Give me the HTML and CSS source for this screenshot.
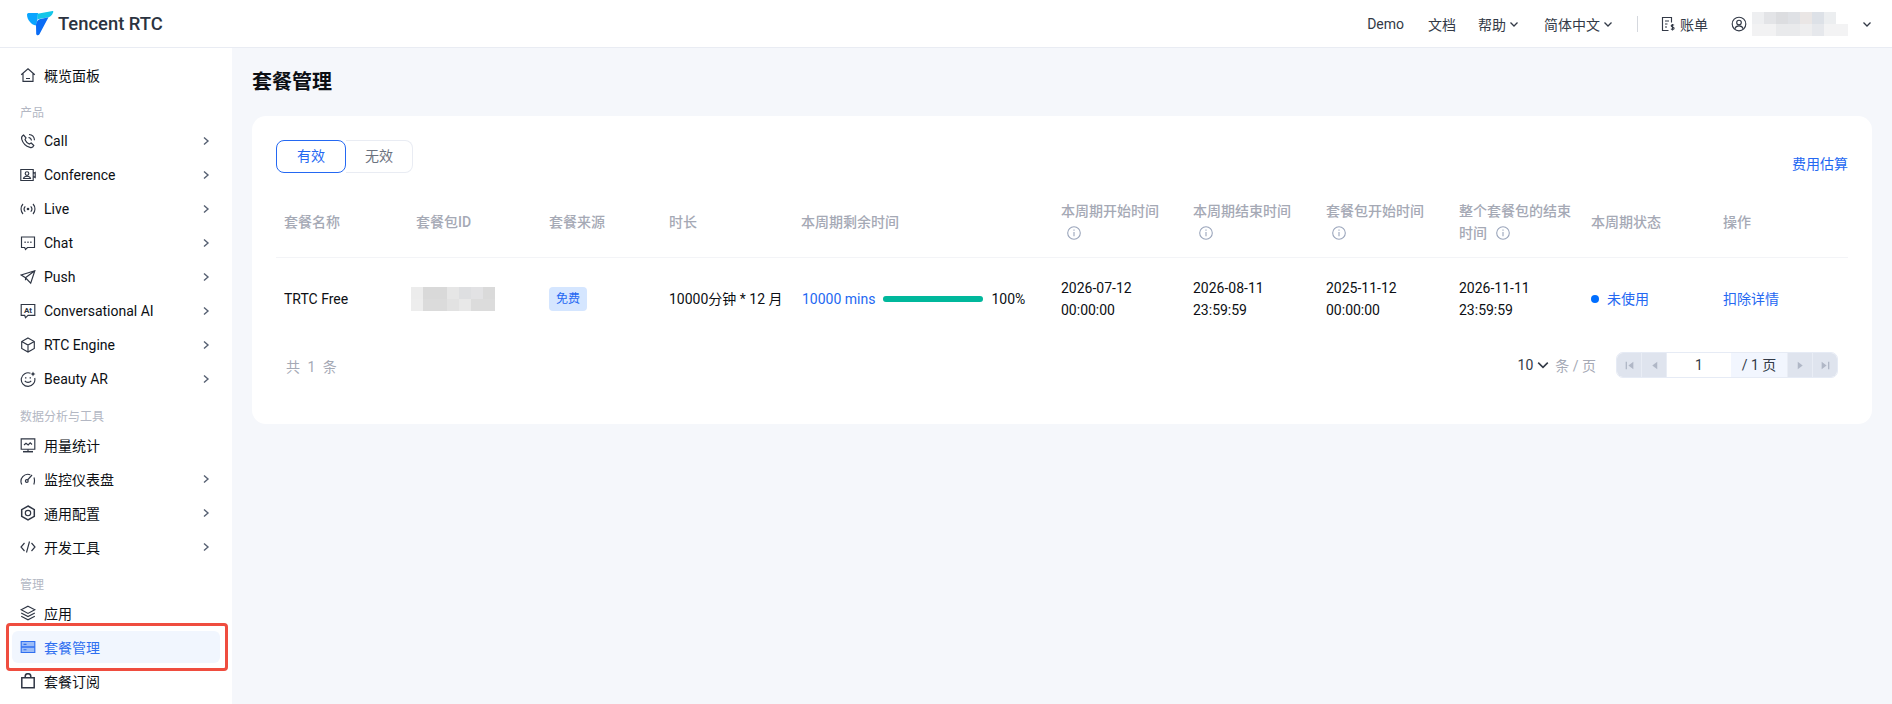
FILE: index.html
```html
<!DOCTYPE html>
<html lang="en">
<head>
    <meta charset="UTF-8">
    <meta name="viewport" content="width=device-width, initial-scale=1.0">
    <title>Tencent RTC</title>
    <link rel="stylesheet" href="styles.css">
</head>
<body>
    <div class="topbar">
        <div class="brand">
            <svg class="logo" viewBox="0 0 27 25" width="27" height="25">
                <path d="M0 3.500C0 2.500 1 2 2.200 2H11L10.500 8.500 8.800 14.500C4 13.800 0 8.500 0 3.500Z" fill="#0aa5ff"/>
                <path d="M10.500 2.800 25.500 0C26.300 0 26.400.5 26.200 1.200 25 4.500 23 6.200 20.500 6.500L10.500 8.200Z" fill="#14c6e8"/>
                <path d="M21.500 6.300 12.300 23.500C11.500 24.800 9.500 24.500 9.200 23L9 13.500C9.500 10 11 8.500 13.500 8Z" fill="#0a6cf5"/>
            </svg>
            <span class="brand-name">Tencent RTC</span>
        </div>
        <div class="topnav">
            <a class="topnav-link">Demo</a>
            <a class="topnav-link">文档</a>
            <a class="topnav-link">帮助<svg class="caret" viewBox="0 0 10 10"><path d="M1.500 3.500 5 7l3.500-3.500"/></svg></a>
            <a class="topnav-link">简体中文<svg class="caret" viewBox="0 0 10 10"><path d="M1.500 3.500 5 7l3.500-3.500"/></svg></a>
            <span class="topnav-sep"></span>
            <a class="topnav-link bill">
                <svg class="icon" viewBox="0 0 16 16"><path d="M8.500 14.500H2.500v-13h9v5M5 5h4M5 8h2.500M5 11h2"/><path d="M14 9.200c-.4-.6-2.800-.9-2.800.6 0 1.500 2.900.9 2.900 2.500 0 1.500-2.600 1.300-3.100.5M12.500 7.900v6.600"/></svg>
                账单
            </a>
            <svg class="icon user-icon" viewBox="0 0 16 16"><circle cx="8" cy="8" r="6.800"/><circle cx="8" cy="6.500" r="2.300"/><path d="M3.800 12.800c.6-2 2.200-3 4.200-3s3.600 1 4.200 3"/></svg>
            <span class="user-blur"></span>
            <svg class="caret" viewBox="0 0 10 10"><path d="M1.500 3.500 5 7l3.500-3.500"/></svg>
        </div>
    </div>

    <div class="layout">
        <div class="sidebar">
            <a class="nav-item">
                <svg class="icon" viewBox="0 0 16 16"><path d="M1.200 7.800 8 1.800l6.800 6M3 6.500v7.800h10V6.500M6 11.500h4"/></svg>
                <span class="nav-text">概览面板</span>
            </a>

            <div class="nav-group">产品</div>
            <a class="nav-item">
                <svg class="icon" viewBox="0 0 16 16"><path d="M3.500 2 6 4.800 5 6.800c.8 1.800 2.200 3.300 4.200 4.200l2-1 2.600 2.500c-.6 1.600-2.200 2.400-3.800 1.900C5.800 13.300 2.800 10.300 1.700 6.200 1.300 4.500 2 2.800 3.500 2Z"/><path d="M8.500 4.500c1.600.2 2.700 1.300 3 3M9 1.500c3 .3 5.300 2.500 5.500 5.700"/></svg>
                <span class="nav-text">Call</span>
                <svg class="chev" viewBox="0 0 10 10"><path d="M3 1.500 7 5 3 8.500"/></svg>
            </a>
            <a class="nav-item">
                <svg class="icon" viewBox="0 0 16 16"><path d="M.8 2.500h12.400v11H.8zM13.200 6.500l2-1v5l-2-1"/><circle cx="7" cy="6.500" r="1.800"/><path d="M3.500 11.500c.3-1.500 1.800-2.300 3.500-2.300s3.200.8 3.500 2.300z"/></svg>
                <span class="nav-text">Conference</span>
                <svg class="chev" viewBox="0 0 10 10"><path d="M3 1.500 7 5 3 8.500"/></svg>
            </a>
            <a class="nav-item">
                <svg class="icon" viewBox="0 0 16 16"><circle class="dot" cx="8" cy="8" r="1.300"/><path d="M5.300 5.300c-1.400 1.500-1.400 3.900 0 5.400M10.700 5.300c1.400 1.500 1.400 3.900 0 5.400M3 3c-2.600 2.800-2.600 7.200 0 10M13 3c2.600 2.800 2.600 7.200 0 10"/></svg>
                <span class="nav-text">Live</span>
                <svg class="chev" viewBox="0 0 10 10"><path d="M3 1.500 7 5 3 8.500"/></svg>
            </a>
            <a class="nav-item">
                <svg class="icon" viewBox="0 0 16 16"><path d="M1.500 2h13v10.500H7.500l-2 2-.8-2H1.500z"/><path class="bold" d="M4.500 7.300h1.200M7.400 7.300h1.200M10.300 7.300h1.200"/></svg>
                <span class="nav-text">Chat</span>
                <svg class="chev" viewBox="0 0 10 10"><path d="M3 1.500 7 5 3 8.500"/></svg>
            </a>
            <a class="nav-item">
                <svg class="icon" viewBox="0 0 16 16"><path d="M14.800 1.800 1.200 6l4.300 2.800 5.200 5.400zM14.800 1.800 5.500 8.800M5.500 8.800v2.500"/></svg>
                <span class="nav-text">Push</span>
                <svg class="chev" viewBox="0 0 10 10"><path d="M3 1.500 7 5 3 8.500"/></svg>
            </a>
            <a class="nav-item">
                <svg class="icon" viewBox="0 0 16 16"><path d="M1.200 1.500h13.600v10.800H8l-2.500 2.500-.8-2.500H1.200z"/><text class="icon-text" x="8" y="9.800">At</text></svg>
                <span class="nav-text">Conversational AI</span>
                <svg class="chev" viewBox="0 0 10 10"><path d="M3 1.500 7 5 3 8.500"/></svg>
            </a>
            <a class="nav-item">
                <svg class="icon" viewBox="0 0 16 16"><path d="M8 1 14.300 4.500v7L8 15l-6.300-3.500v-7zM1.700 4.500 8 8l6.300-3.500M8 8v7"/></svg>
                <span class="nav-text">RTC Engine</span>
                <svg class="chev" viewBox="0 0 10 10"><path d="M3 1.500 7 5 3 8.500"/></svg>
            </a>
            <a class="nav-item">
                <svg class="icon" viewBox="0 0 16 16"><path d="M10.500 2.200A6.800 6.800 0 1 0 14.700 7"/><path d="M4.800 9.800c1.500 2 4.900 2 6.400 0M5 6.800h1.400M9.600 6.800H11"/><path class="dot" d="M13 .5l.8 1.700 1.700.8-1.700.8-.8 1.700-.8-1.700-1.700-.8 1.700-.8z"/></svg>
                <span class="nav-text">Beauty AR</span>
                <svg class="chev" viewBox="0 0 10 10"><path d="M3 1.500 7 5 3 8.500"/></svg>
            </a>

            <div class="nav-group">数据分析与工具</div>
            <a class="nav-item">
                <svg class="icon" viewBox="0 0 16 16"><path d="M1.200 1.800h13.600v10.400H1.200z"/><path class="bold" d="M3 14.700h10"/><path d="M8 12.200v2.500M4 8l2-1.800 2.200 1.800L10.200 5.800 12 7.500"/></svg>
                <span class="nav-text">用量统计</span>
            </a>
            <a class="nav-item">
                <svg class="icon" viewBox="0 0 16 16"><path d="M1.800 13.500a7 7 0 0 1 8.500-9.800M14 6.500c.7 2.300.6 4.800-.2 7"/><path d="M7.500 9 12 4"/><circle cx="6.800" cy="10" r="1.400"/></svg>
                <span class="nav-text">监控仪表盘</span>
                <svg class="chev" viewBox="0 0 10 10"><path d="M3 1.500 7 5 3 8.500"/></svg>
            </a>
            <a class="nav-item">
                <svg class="icon" viewBox="0 0 16 16"><path class="bold" d="M8 1 14.300 4.600v6.800L8 15l-6.300-3.600V4.600z"/><circle cx="8" cy="8" r="2.700"/></svg>
                <span class="nav-text">通用配置</span>
                <svg class="chev" viewBox="0 0 10 10"><path d="M3 1.500 7 5 3 8.500"/></svg>
            </a>
            <a class="nav-item">
                <svg class="icon" viewBox="0 0 16 16"><path d="M4.500 4 1 8l3.500 4M11.500 4 15 8l-3.500 4M9.500 2.500 6.500 13.500"/></svg>
                <span class="nav-text">开发工具</span>
                <svg class="chev" viewBox="0 0 10 10"><path d="M3 1.500 7 5 3 8.500"/></svg>
            </a>

            <div class="nav-group">管理</div>
            <a class="nav-item">
                <svg class="icon" viewBox="0 0 16 16"><path d="M8 1.200 14.800 4.800 8 8.400 1.200 4.800zM1.200 8 8 11.600 14.800 8M1.200 11.200 8 14.800l6.800-3.600"/></svg>
                <span class="nav-text">应用</span>
            </a>
            <a class="nav-item active">
                <svg class="icon" viewBox="0 0 16 16"><path class="solid" d="M1.200 2.500h13.600v11H1.200z"/><path class="bold" d="M1.200 8h13.600"/><path class="notch" d="M3.500 5.300h3M3.500 10.700h3"/></svg>
                <span class="nav-text">套餐管理</span>
            </a>
            <a class="nav-item">
                <svg class="icon" viewBox="0 0 16 16"><path class="bold" d="M1.800 4.800h12.400v10H1.800zM5.200 4.800V3.500a2.800 2.800 0 0 1 5.600 0v1.300"/></svg>
                <span class="nav-text">套餐订阅</span>
            </a>
        </div>

        <div class="main">
            <h2 class="page-title">套餐管理</h2>
            <div class="card">
                <div class="toolbar">
                    <div class="tabs">
                        <span class="tab on">有效</span>
                        <span class="tab">无效</span>
                    </div>
                    <a class="link">费用估算</a>
                </div>

                <table class="plans">
                    <colgroup>
                        <col class="c132"><col class="c133"><col class="c120"><col class="c132"><col class="c260"><col class="c132"><col class="c133"><col class="c133"><col class="c132"><col class="c132"><col class="c133">
                    </colgroup>
                    <thead>
                        <tr>
                            <th>套餐名称</th>
                            <th>套餐包ID</th>
                            <th>套餐来源</th>
                            <th>时长</th>
                            <th>本周期剩余时间</th>
                            <th>本周期开始时间 <svg class="info" viewBox="0 0 14 14"><circle cx="7" cy="7" r="6.300"/><path d="M7 6v4.300M7 3.500v1.200"/></svg></th>
                            <th>本周期结束时间 <svg class="info" viewBox="0 0 14 14"><circle cx="7" cy="7" r="6.300"/><path d="M7 6v4.300M7 3.500v1.200"/></svg></th>
                            <th>套餐包开始时间 <svg class="info" viewBox="0 0 14 14"><circle cx="7" cy="7" r="6.300"/><path d="M7 6v4.300M7 3.500v1.200"/></svg></th>
                            <th>整个套餐包的结束时间 <svg class="info" viewBox="0 0 14 14"><circle cx="7" cy="7" r="6.300"/><path d="M7 6v4.300M7 3.500v1.200"/></svg></th>
                            <th>本周期状态</th>
                            <th>操作</th>
                        </tr>
                    </thead>
                    <tbody>
                        <tr>
                            <td>TRTC Free</td>
                            <td><span class="id-blur"></span></td>
                            <td><span class="tag">免费</span></td>
                            <td>10000分钟 * 12 月</td>
                            <td>
                                <div class="usage">
                                    <span class="link">10000 mins</span>
                                    <span class="bar"><span class="bar-fill"></span></span>
                                    <span>100%</span>
                                </div>
                            </td>
                            <td>2026-07-12<br>00:00:00</td>
                            <td>2026-08-11<br>23:59:59</td>
                            <td>2025-11-12<br>00:00:00</td>
                            <td>2026-11-11<br>23:59:59</td>
                            <td><span class="status"><i class="status-dot"></i>未使用</span></td>
                            <td><a class="link">扣除详情</a></td>
                        </tr>
                    </tbody>
                </table>

                <div class="pager-row">
                    <span class="total">共 1 条</span>
                    <div class="pager-right">
                        <span class="page-size">10<svg class="caret" viewBox="0 0 10 10"><path d="M1 3 5 7l4-4"/></svg></span>
                        <span class="per-page">条 / 页</span>
                        <div class="pager">
                            <span class="pg-btn"><svg viewBox="0 0 10 10"><path d="M1.500 1.500h1.200v7H1.500zM8.500 1.500v7L4 5z"/></svg></span>
                            <span class="pg-btn"><svg viewBox="0 0 10 10"><path d="M7.500 1.500v7L3 5z"/></svg></span>
                            <span class="pg-input">1</span>
                            <span class="pg-count">/ 1 页</span>
                            <span class="pg-btn"><svg viewBox="0 0 10 10"><path d="M2.500 1.500v7L7 5z"/></svg></span>
                            <span class="pg-btn"><svg viewBox="0 0 10 10"><path d="M1.500 1.500v7L6 5zM7.300 1.500h1.200v7H7.300z"/></svg></span>
                        </div>
                    </div>
                </div>
            </div>
        </div>
    </div>
</body>
</html>
```

FILE: styles.css
```css
*{
    margin: 0;
    padding: 0;
    box-sizing: border-box;
}
body{
    height: 100vh;
    overflow: hidden;
    background-color: #f5f7fb;
    font-family: Roboto, "Noto Sans CJK SC", sans-serif;
    font-size: 14px;
    color: #111;
}
a{
    color: inherit;
    text-decoration: none;
}

/* top bar */
.topbar{
    height: 48px;
    background-color: #fff;
    border-bottom: 1px solid #e9ecf3;
    display: flex;
    align-items: center;
    justify-content: space-between;
}
.brand{
    display: flex;
    align-items: center;
    margin-left: 27px;
    gap: 4px;
}
.logo{
    display: block;
}
.brand-name{
    font-size: 18.4px;
    font-weight: 500;
    color: #2b3340;
}
.topnav{
    display: flex;
    align-items: center;
    padding-right: 20px;
    color: #333a47;
}
.topnav-link{
    display: flex;
    align-items: center;
    margin-right: 24px;
}
.topnav-link .caret{
    margin-left: 3px;
}
.topnav-link:nth-child(2){
    margin-right: 22px;
}
.topnav-link:nth-child(3){
    margin-right: 25px;
}
.topnav-sep{
    width: 1px;
    height: 16px;
    background-color: #d5d8de;
    margin-right: 22px;
}
.bill{
    gap: 4px;
    margin-right: 23px;
}
.user-blur{
    width: 107px;
    height: 24px;
    margin: 0 3px 0 5px;
    background:
        linear-gradient(90deg, #eeeff1 0 12px, #e3e4e7 12px 24px, #dcdde0 24px 36px, #dfe1e5 36px 48px, #eae6e5 48px 60px, #dde1e7 60px 72px, #eceef0 72px 84px, #fff 84px) top / 100% 50% no-repeat,
        linear-gradient(90deg, #f2f2f3 0 24px, #e9eaec 24px 48px, #eeeeef 48px 60px, #e6e8ec 60px 72px, #f3f3f4 72px 96px, #fff 96px) bottom / 100% 50% no-repeat;
}
.icon{
    width: 16px;
    height: 16px;
    flex-shrink: 0;
    fill: none;
    stroke: currentColor;
    stroke-width: 1.15;
}
.icon .dot{
    fill: currentColor;
    stroke: none;
}
.icon .bold{
    stroke-width: 1.5;
}
.icon-text{
    font-size: 8px;
    font-weight: 700;
    fill: currentColor;
    stroke: none;
    text-anchor: middle;
}
.caret{
    width: 10px;
    height: 10px;
    fill: none;
    stroke: #333a47;
    stroke-width: 1.3;
}

/* side menu */
.layout{
    display: flex;
    height: calc(100vh - 48px);
}
.sidebar{
    width: 232px;
    flex-shrink: 0;
    background-color: #fff;
    padding: 11px 12px 0;
    overflow: hidden;
}
.nav-item{
    position: relative;
    display: flex;
    align-items: center;
    gap: 8px;
    height: 32px;
    padding: 0 8px;
    margin-bottom: 2px;
    border-radius: 6px;
    color: #2f3644;
}
.nav-text{
    flex: 1;
    color: #0c0f14;
}
.chev{
    width: 10px;
    height: 10px;
    margin-right: 1px;
    fill: none;
    stroke: #566072;
    stroke-width: 1.4;
}
.nav-group{
    height: 24px;
    line-height: 24px;
    margin-top: 10px;
    padding-left: 8px;
    font-size: 12px;
    color: #b3b7c3;
}
.nav-item.active{
    background-color: #f1f6fe;
    color: #2f6ff0;
}
.nav-item.active .nav-text{
    color: #2f6ff0;
}
.nav-item.active .solid{
    fill: #9dbdf7;
}
.nav-item.active .notch{
    stroke: #2f6ff0;
}
/* red marker drawn over the screenshot */
.nav-item.active::after{
    content: "";
    position: absolute;
    top: -8px;
    bottom: -8px;
    left: -6px;
    right: -8px;
    border: 3px solid #ef4d3f;
    border-radius: 4px;
}

/* main */
.main{
    flex: 1;
    padding: 20px 20px 0;
}
.page-title{
    font-size: 20px;
    font-weight: 600;
    line-height: 28px;
    margin-bottom: 20px;
    color: #0c0f14;
}
.card{
    height: 308px;
    padding: 24px;
    background-color: #fff;
    border-radius: 14px;
}
.toolbar{
    display: flex;
    justify-content: space-between;
    align-items: flex-end;
    height: 35px;
}
.tabs{
    display: flex;
    align-self: flex-start;
    height: 33px;
}
.tab{
    width: 67px;
    line-height: 31px;
    text-align: center;
    color: #6b7280;
    border: 1px solid #e9ecf3;
    border-left: none;
    border-radius: 0 8px 8px 0;
}
.tab.on{
    width: 70px;
    color: #2468f2;
    border: 1px solid #2468f2;
    border-radius: 8px;
}
.link{
    color: #2468f2;
    line-height: 22px;
}

/* table */
.plans{
    width: 1572px;
    margin-top: 12px;
    table-layout: fixed;
    border-collapse: separate;
    border-spacing: 0;
}
.c120{ width: 120px; }
.c132{ width: 132px; }
.c133{ width: 133px; }
.c260{ width: 260px; }
.plans th{
    padding: 13px 8px;
    text-align: left;
    font-weight: 500;
    line-height: 22px;
    color: #a5a9b5;
    border-bottom: 1px solid #f3f4f7;
}
.plans td{
    padding: 19px 8px;
    line-height: 22px;
    color: #0c0f14;
}
.info{
    width: 14px;
    height: 14px;
    margin-left: 6px;
    vertical-align: -2px;
    fill: none;
    stroke: #9aa5bb;
    stroke-width: 1.1;
}
.id-blur{
    display: block;
    width: 84px;
    height: 24px;
    margin-left: -5px;
    background:
        linear-gradient(90deg, #ececec 0 12px, #d9d9d9 12px 36px, #e6e6e6 36px 48px, #dedfe1 48px 60px, #e2e2e4 60px 72px, #dadada 72px) top / 100% 50% no-repeat,
        linear-gradient(90deg, #ededed 0 12px, #dbdbdb 12px 36px, #e2e2e2 36px 48px, #e8e8e8 48px 60px, #dcdcdc 60px);
}
.tag{
    display: block;
    width: 38px;
    height: 24px;
    line-height: 24px;
    text-align: center;
    font-size: 12px;
    color: #2468f2;
    background-color: #d5e6ff;
    border-radius: 4px;
}
.usage{
    display: flex;
    align-items: center;
    white-space: nowrap;
    gap: 8px;
    padding-left: 1px;
}
.bar{
    width: 100px;
    height: 6px;
    border-radius: 3px;
    background-color: #e6e9ef;
}
.bar-fill{
    display: block;
    width: 100%;
    height: 100%;
    border-radius: 3px;
    background-color: #00b89c;
}
.status{
    display: flex;
    align-items: center;
    color: #2468f2;
}
.status-dot{
    width: 8px;
    height: 8px;
    margin-right: 8px;
    border-radius: 50%;
    background-color: #006eff;
}

/* pagination */
.pager-row{
    display: flex;
    justify-content: space-between;
    align-items: center;
    margin: 12px 10px 0 0;
    height: 26px;
}
.total{
    padding: 2px 0 0 10px;
    color: #a5a9b5;
    word-spacing: 4px;
}
.pager-right{
    display: flex;
    align-items: center;
}
.page-size{
    display: flex;
    align-items: center;
    gap: 4px;
    padding-left: 1px;
    color: #333a47;
}
.page-size .caret{
    width: 12px;
    height: 12px;
}
.per-page{
    margin: 0 20px 0 6px;
    color: #a5a9b5;
}
.pager{
    display: flex;
    height: 26px;
    border: 1px solid #e6ebf5;
    border-radius: 7px;
    overflow: hidden;
}
.pg-btn{
    width: 25px;
    display: flex;
    align-items: center;
    justify-content: center;
    background-color: #dfe4ee;
    border-right: 1px solid #e9edf5;
}
.pg-btn:nth-last-child(-n+2){
    border-right: none;
    border-left: 1px solid #e9edf5;
}
.pg-btn svg{
    width: 11px;
    height: 11px;
    fill: #b0b7c6;
}
.pg-input{
    width: 64px;
    line-height: 24px;
    text-align: center;
    background-color: #fff;
    color: #333a47;
}
.pg-count{
    width: 56px;
    line-height: 24px;
    text-align: center;
    background-color: #f2f6fe;
    color: #333a47;
}
```
